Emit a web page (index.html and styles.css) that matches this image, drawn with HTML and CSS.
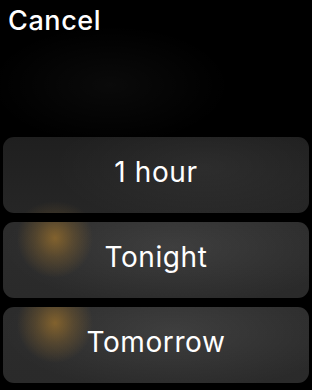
FILE: index.html
```html
<!DOCTYPE html>
<html lang="en">
<head>
  <meta charset="UTF-8">
  <title>Snooze</title>
  <link rel="stylesheet" href="styles.css">
</head>
<body>

  <div class="screen">
    <div class="cancel">Cancel</div>

    <div class="options">
      <button class="option option-first">1 hour</button>
      <button class="option option-glow">Tonight</button>
      <button class="option option-glow">Tomorrow</button>
    </div>
  </div>

</body>
</html>
```

FILE: styles.css
```css
body {
  margin: 0;
  background-color: #000;
  color: #fff;
  font-family: Inter, 'Noto Sans', sans-serif;
}

.screen {
  width: 312px;
  height: 390px;
  display: flex;
  flex-direction: column;
  background:
    radial-gradient(ellipse 120px 60px at 110px 85px, rgba(255, 255, 255, 0.04), transparent 100%),
    #000;
}

.cancel {
  font-size: 27px;
  font-weight: 500;
  line-height: 30px;
  padding: 6px 0 0 8px;
  height: 100px;
  box-sizing: border-box;
  letter-spacing: 0.6px;
}

.options {
  display: flex;
  flex-direction: column;
  gap: 9px;
  padding: 37px 3px 0;
}

.option {
  height: 76px;
  border: none;
  border-radius: 11px;
  color: #fff;
  font-family: inherit;
  font-size: 28px;
  letter-spacing: 0.6px;
  padding: 0 0 6px;
}

.option-first {
  background:
    radial-gradient(ellipse 40px 32px at 52px 96px, rgba(150, 110, 45, 0.5), rgba(150, 110, 45, 0.2) 50%, transparent 100%),
    radial-gradient(ellipse 150px 60px at 200px 30px, rgba(255, 255, 255, 0.05), transparent 100%),
    linear-gradient(#1f1f1f, #262626);
}

.option-glow {
  background:
    radial-gradient(ellipse 38px 40px at 52px 16px, rgba(150, 110, 45, 0.8), rgba(150, 110, 45, 0.35) 50%, transparent 100%),
    radial-gradient(ellipse 170px 60px at 170px 25px, rgba(255, 255, 255, 0.09), transparent 100%),
    linear-gradient(#2c2c2c, #2a2a2a);
}
```
